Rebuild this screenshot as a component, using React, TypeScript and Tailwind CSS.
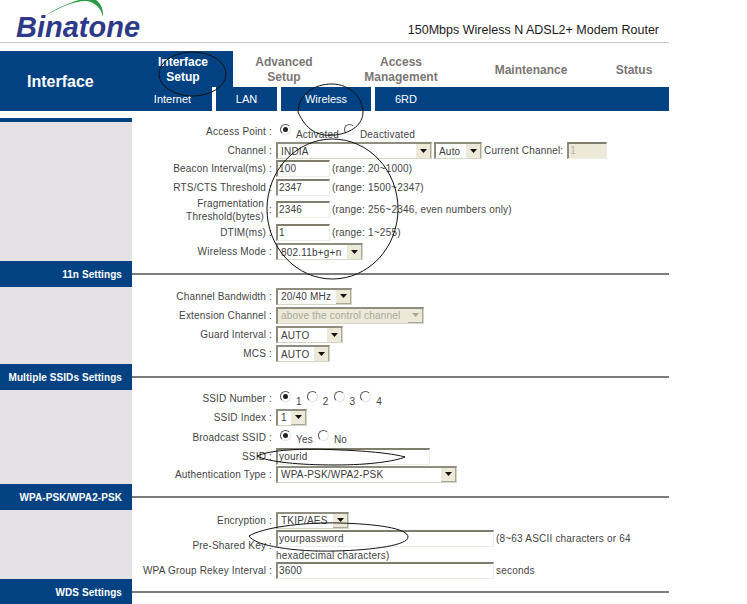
import React from "react";

function Arrow({ dim }: { dim?: boolean }) {
  return (
    <span className="ml-auto flex h-[15px] w-[15px] shrink-0 items-center justify-center border-r border-b border-[#a9a797] bg-[#ece9d8]">
      <svg width="7" height="4" viewBox="0 0 7 4">
        <path d="M0 0H7L3.5 4Z" fill={dim ? "#a8a699" : "#111"} />
      </svg>
    </span>
  );
}

function Select({ w, value, disabled }: { w: string; value: string; disabled?: boolean }) {
  return (
    <span
      className={`flex h-[17px] shrink-0 items-center overflow-hidden border-t-2 border-l-2 border-r border-b border-t-[#8f8d80] border-l-[#8f8d80] border-r-[#d8d6c8] border-b-[#d8d6c8] pl-[3px] ${w} ${
        disabled ? "bg-[#ece9d8] text-[#aaa89b]" : "bg-white text-[#3c3c3c]"
      }`}
    >
      <span className="whitespace-nowrap">{value}</span>
      <Arrow dim={disabled} />
    </span>
  );
}

function Input({ w, value, disabled }: { w: string; value: string; disabled?: boolean }) {
  return (
    <span
      className={`inline-flex h-[17px] shrink-0 items-center border-t-2 border-l-2 border-r border-b border-t-[#7f7d70] border-l-[#8f8d80] border-r-[#efeee6] border-b-[#efeee6] pb-[1px] pl-[1px] ${w} ${
        disabled ? "bg-[#ece9d8] text-[#b5b3a6]" : "bg-white text-[#3c3c3c]"
      }`}
    >
      {value}
    </span>
  );
}

function Radio({ on }: { on?: boolean }) {
  return (
    <span className="mb-[4px] flex h-[11px] w-[11px] shrink-0 items-center justify-center rounded-full border border-t-[#555] border-l-[#555] border-r-[#e4e4e4] border-b-[#e4e4e4] bg-white">
      {on && <span className="h-[5px] w-[5px] rounded-full bg-[#222]" />}
    </span>
  );
}

function Choice({ items }: { items: { text: string; on?: boolean }[] }) {
  return (
    <span className="flex items-center gap-[5px] pl-[4px]">
      {items.map((it) => (
        <React.Fragment key={it.text}>
          <Radio on={it.on} />
          <span className="mt-[5px]">{it.text}</span>
        </React.Fragment>
      ))}
    </span>
  );
}

function Row({ h, label, children }: { h: string; label: React.ReactNode; children: React.ReactNode }) {
  return (
    <div className={`flex items-center ${h}`}>
      <div className="w-[144px] shrink-0 pr-[4px] text-right leading-[13px] tracking-[0.18px]">{label}</div>
      <div className="flex min-w-0 flex-1 items-center gap-[2px] whitespace-nowrap">{children}</div>
    </div>
  );
}

function Head({ title }: { title: string }) {
  return (
    <div className="flex h-[26px]">
      <div className="flex w-[132px] items-center justify-end bg-[#034282] pr-[10px] text-[10px] font-bold tracking-[0.08px] text-white">
        {title}
      </div>
      <div className="flex flex-1 items-center">
        <div className="h-[2px] w-full bg-[#7d7d7d]" />
      </div>
    </div>
  );
}

function Section({ h, first, children }: { h: string; first?: boolean; children: React.ReactNode }) {
  return (
    <div className={`flex ${h}`}>
      <div className={`w-[132px] shrink-0 bg-[#e4e2e5] ${first ? "mt-[7px] border-t-4 border-[#034282]" : ""}`} />
      <div className="flex min-w-0 flex-1 flex-col">{children}</div>
    </div>
  );
}

export default function App() {
  return (
    <div className="relative h-[604px] w-[747px] overflow-hidden bg-white font-['Liberation_Sans',Arial,sans-serif] text-[10px] tracking-[0.2px] text-[#444]">
      <div className="w-[669px]">
        {/* header */}
        <div className="flex h-[43px] items-end justify-between border-b border-[#c8c8c8]">
          <div className="relative h-[42px] w-[160px]">
            <svg className="absolute left-0 top-0" width="160" height="42" viewBox="0 0 160 42">
              <path d="M43 17C58 7 75 0 88 -2C97 -3 104 6 103 17C101 8 95 2 86 1C72 1 57 9 43 17Z" fill="#2f9a46" />
            </svg>
            <span className="absolute left-[16px] top-[11px] text-[29px] font-bold italic leading-[32px] tracking-normal text-[#2e3a87]">
              Binatone
            </span>
          </div>
          <div className="mb-[4px] mr-[10px] text-[12.5px] leading-[16px] tracking-normal text-[#1a1a1a]">
            150Mbps Wireless N ADSL2+ Modem Router
          </div>
        </div>

        {/* nav */}
        <div className="mt-[8px] flex h-[60px]">
          <div className="flex w-[133px] items-center bg-[#034282] pl-[27px] pt-[2px] text-[16px] font-bold tracking-normal text-white">
            Interface
          </div>
          <div className="flex flex-1 flex-col">
            <div className="flex h-[36px] text-center text-[12px] font-bold leading-[15px] tracking-normal text-[#7b7773]">
              <div className="flex w-[100px] items-center justify-center bg-[#034282] pt-[2px] text-white">
                <span>Interface<br />Setup</span>
              </div>
              <div className="flex w-[102px] items-center justify-center pt-[2px]"><span>Advanced<br />Setup</span></div>
              <div className="flex w-[132px] items-center justify-center pt-[2px]"><span>Access<br />Management</span></div>
              <div className="flex w-[128px] items-center justify-center pt-[2px]">Maintenance</div>
              <div className="flex w-[74px] items-center justify-center pl-[4px] pt-[2px]">Status</div>
            </div>
            <div className="flex h-[24px] gap-[4px] text-center text-[11px] tracking-normal text-white">
              <div className="flex w-[79px] items-center justify-center bg-[#034282] pt-[1px]">Internet</div>
              <div className="flex w-[61px] items-center justify-center bg-[#034282] pt-[1px]">LAN</div>
              <div className="flex w-[90px] items-center justify-center bg-[#034282] pt-[1px]">Wireless</div>
              <div className="flex flex-1 items-center bg-[#034282] pl-[20px] pt-[1px]">6RD</div>
            </div>
          </div>
        </div>

        {/* Wireless */}
        <Section h="h-[150px]" first>
          <div className="h-[11px]" />
          <Row h="h-[19px]" label="Access Point :">
            <Choice items={[{ text: "Activated", on: true }, { text: "Deactivated" }]} />
          </Row>
          <Row h="h-[19px]" label="Channel :">
            <Select w="w-[156px]" value="INDIA" />
            <Select w="w-[48px]" value="Auto" />
            <span>Current Channel:</span>
            <Input w="w-[40px] ml-[2px]" value="1" disabled />
          </Row>
          <Row h="h-[17px]" label="Beacon Interval(ms) :">
            <Input w="w-[54px]" value="100" />
            <span>(range: 20~1000)</span>
          </Row>
          <Row h="h-[20px]" label="RTS/CTS Threshold :">
            <Input w="w-[54px]" value="2347" />
            <span>(range: 1500~2347)</span>
          </Row>
          <Row
            h="h-[25px]"
            label={
              <span className="flex items-center justify-end gap-[5px]">
                <span>Fragmentation<br />Threshold(bytes)</span>
                <span>:</span>
              </span>
            }
          >
            <Input w="w-[54px]" value="2346" />
            <span>(range: 256~2346, even numbers only)</span>
          </Row>
          <Row h="h-[20px]" label="DTIM(ms) :">
            <Input w="w-[54px]" value="1" />
            <span>(range: 1~255)</span>
          </Row>
          <Row h="h-[19px]" label="Wireless Mode :">
            <Select w="w-[87px]" value="802.11b+g+n" />
          </Row>
        </Section>

        <Head title="11n Settings" />
        <Section h="h-[77px]">
          <Row h="h-[18px]" label="Channel Bandwidth :"><Select w="w-[76px]" value="20/40 MHz" /></Row>
          <Row h="h-[20px]" label="Extension Channel :"><Select w="w-[148px]" value="above the control channel" disabled /></Row>
          <Row h="h-[19px]" label="Guard Interval :"><Select w="w-[67px]" value="AUTO" /></Row>
          <Row h="h-[19px]" label="MCS :"><Select w="w-[54px]" value="AUTO" /></Row>
        </Section>

        <Head title="Multiple SSIDs Settings" />
        <Section h="h-[94px]">
          <Row h="h-[17px]" label="SSID Number :">
            <Choice items={[{ text: "1", on: true }, { text: "2" }, { text: "3" }, { text: "4" }]} />
          </Row>
          <Row h="h-[20px]" label="SSID Index :"><Select w="w-[31px]" value="1" /></Row>
          <Row h="h-[20px]" label="Broadcast SSID :">
            <Choice items={[{ text: "Yes", on: true }, { text: "No" }]} />
          </Row>
          <Row h="h-[18px]" label="SSID :"><Input w="w-[154px]" value="yourid" /></Row>
          <Row h="h-[18px]" label="Authentication Type :"><Select w="w-[181px]" value="WPA-PSK/WPA2-PSK" /></Row>
        </Section>

        <Head title="WPA-PSK/WPA2-PSK" />
        <Section h="h-[69px]">
          <Row h="h-[20px]" label="Encryption :"><Select w="w-[73px]" value="TKIP/AES" /></Row>
          <div className="flex h-[32px]">
            <div className="w-[144px] shrink-0 pr-[4px] pt-[8px] text-right tracking-[0.18px]">Pre-Shared Key :</div>
            <div className="flex min-w-0 flex-1 flex-col">
              <div className="flex h-[17px] items-center gap-[2px] whitespace-nowrap">
                <Input w="w-[218px]" value="yourpassword" />
                <span>(8~63 ASCII characters or 64</span>
              </div>
              <div className="flex h-[15px] items-center pt-[2px]">hexadecimal characters)</div>
            </div>
          </div>
          <Row h="h-[17px]" label="WPA Group Rekey Interval :">
            <Input w="w-[218px]" value="3600" />
            <span>seconds</span>
          </Row>
        </Section>

        <Head title="WDS Settings" />
      </div>

      {/* hand-drawn marks */}
      <svg className="pointer-events-none absolute left-0 top-0" width="747" height="604" viewBox="0 0 747 604" fill="none" stroke="#111" strokeWidth="1">
        <ellipse cx="192.500" cy="74" rx="33.500" ry="22" />
        <path d="M298 112C299 94 314 84 332 84C350 84 363 98 363 112C363 124 352 133 335 135C318 137 306 130 298 112Z" />
        <ellipse cx="332.500" cy="209" rx="65.500" ry="70" />
        <path d="M257 456C270 450 300 448 340 450C370 451 395 454 405 457C396 461 370 465 335 465C300 465 268 462 257 456Z" />
        <path d="M249 536C262 528 300 522 340 523C375 524 408 528 408 537C408 545 375 550 335 551C295 552 255 546 249 536Z" />
      </svg>
    </div>
  );
}
